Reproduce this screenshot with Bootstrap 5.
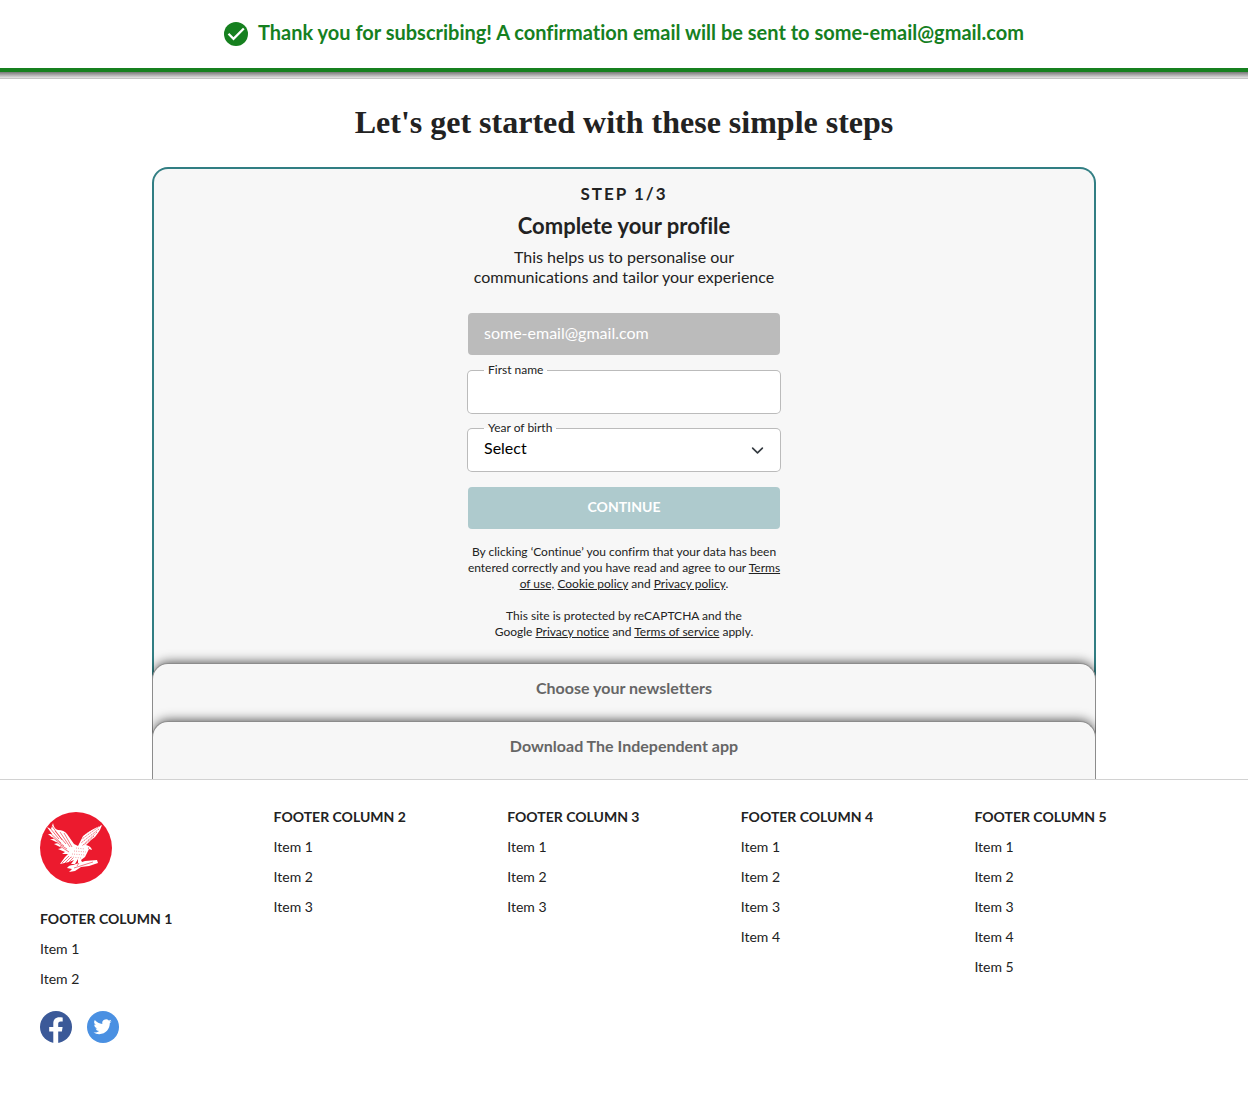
<!DOCTYPE html>
<html lang="en">
<head>
<meta charset="utf-8">
<meta name="viewport" content="width=device-width, initial-scale=1">
<title>Let's get started</title>
<link href="https://cdn.jsdelivr.net/npm/bootstrap@5.3.0/dist/css/bootstrap.min.css" rel="stylesheet">
<style>
  body { font-family: Lato, "Open Sans", sans-serif; font-variant-ligatures: none; color: #222; background: #fff; }
  .notice { color: #16801f; border-bottom: 4px solid #16801f; padding: 20px 16px; font-size: 20px; font-weight: 700; gap: 10px; }
  .notice-text { padding-bottom: 4px; line-height: 24px; }
  .header-edge { height: 7px; border-bottom: 1px solid #c4c4c4; background: linear-gradient(#777, #e4e4e4); }
  .page-title { font-family: "Liberation Serif", serif; font-size: 32px; line-height: 40px; font-weight: 700; padding: 23px 16px 25px; margin: 0; }
  .steps { max-width: 944px; }
  .step-panel { background: #f7f7f7; border: 1px solid #8c8c8c; border-bottom: 0; border-radius: 16px 16px 0 0; color: #666; font-size: 16px; line-height: 24px; font-weight: 700; height: 74px; padding-top: 12px; margin-top: -16px; box-shadow: 0 -2px 12px -2px rgba(0,0,0,.75); clip-path: inset(-14px 0 0 0); }
  .step-panel.last-panel { height: 58px; }
  .step-active { background: #f7f7f7; border: 2px solid #317e83; border-bottom: 0; border-radius: 16px 16px 0 0; padding: 13px 16px 39px; }
  .step-count { font-size: 17px; line-height: 24px; letter-spacing: 2px; font-weight: 700; }
  .step-title { font-size: 22px; line-height: 28px; font-weight: 700; margin: 6px 0 7px; }
  .step-intro { font-size: 16px; line-height: 20px; margin: 0 -2px 10px; }
  .profile-form { width: 312px; max-width: 100%; gap: 16px; }
  .profile-form .form-control, .profile-form .form-select { height: 42px; border: 0; border-radius: 4px; padding: 0 16px 4px; font-size: 16px; color: #000; box-shadow: 0 0 0 1px #bbb; }
  .profile-form .form-select { background-position: right 16px center; background-size: 13px 13px; }
  .profile-form .form-control:disabled { background: #bbb; color: #fff; -webkit-text-fill-color: #fff; opacity: 1; box-shadow: none; }
  .field-label { top: -9px; left: 16px; padding: 0 4px; font-size: 12px; line-height: 16px; background: linear-gradient(#f7f7f7 50%, #fff 50%); }
  .btn-continue, .btn-continue:disabled { height: 42px; background: #aecacd; color: #fff; border: 0; border-radius: 4px; font-size: 14px; font-weight: 700; opacity: 1; padding: 0 0 4px; }
  .legal { font-size: 12px; line-height: 16px; margin: -1px -4px 0; }
  .legal p { margin: 0 0 16px; }
  .legal p:last-child { margin: 0; }
  .legal a, .site-footer a { color: #222; }
  .site-footer { border-top: 1px solid #d2d2d2; background: #fff; padding: 32px 40px 64px; font-size: 14px; line-height: 20px; }
  .site-footer h2 { font-size: 14px; line-height: 20px; font-weight: 700; margin: -5px 0 10px; }
  .site-footer li { margin-bottom: 10px; }
  .site-footer li a { text-decoration: none; }
  .brand-mark { margin-bottom: 30px; }
  .socials { gap: 15px; padding-top: 12px; }
</style>
<script src="https://cdn.jsdelivr.net/npm/bootstrap@5.3.0/dist/js/bootstrap.bundle.min.js"></script>
</head>
<body>
<div class="notice d-flex justify-content-center align-items-center" role="status">
  <svg width="24" height="24" viewBox="0 0 24 24" aria-hidden="true"><circle cx="12" cy="12" r="12" fill="#16801f"/><path d="M4.500 11.800l5 5L19.800 6.500" fill="none" stroke="#fff" stroke-width="2.300"/></svg>
  <span class="notice-text">Thank you for subscribing! A confirmation email will be sent to some-email@gmail.com</span>
</div>
<div class="header-edge"></div>
<main>
  <h1 class="page-title text-center">Let's get started with these simple steps</h1>
  <div class="steps mx-auto text-center">
    <section class="step-active d-flex flex-column align-items-center">
      <div class="step-count">STEP 1/3</div>
      <h2 class="step-title">Complete your profile</h2>
      <form class="profile-form d-flex flex-column">
        <p class="step-intro">This helps us to personalise our communications and tailor your experience</p>
        <input class="form-control" type="email" value="some-email@gmail.com" aria-label="Email" disabled>
        <div class="position-relative">
          <label class="field-label position-absolute" for="first-name">First name</label>
          <input class="form-control" type="text" id="first-name">
        </div>
        <div class="position-relative">
          <label class="field-label position-absolute" for="birth-year">Year of birth</label>
          <select class="form-select" id="birth-year"><option>Select</option></select>
        </div>
        <button class="btn btn-continue" type="submit" disabled>CONTINUE</button>
        <div class="legal">
          <p>By clicking ‘Continue’ you confirm that your data has been entered correctly and you have read and agree to our <a href="#">Terms of use,</a> <a href="#">Cookie policy</a> and <a href="#">Privacy policy</a>.</p>
          <p>This site is protected by reCAPTCHA and the<br>Google <a href="#">Privacy notice</a> and <a href="#">Terms of service</a> apply.</p>
        </div>
      </form>
    </section>
    <section class="step-panel position-relative">Choose your newsletters</section>
    <section class="step-panel last-panel position-relative">Download The Independent app</section>
  </div>
</main>
<footer class="site-footer">
  <div class="row row-cols-5 g-0">
    <div class="col">
      <svg class="brand-mark d-block" width="72" height="72" viewBox="0 0 72 72" role="img" aria-label="The Independent">
        <circle cx="36" cy="36" r="36" fill="#ec1a2e"/>
        <path fill="#fff" d="M13 11Q14 17 18 18Q24 18 27 22L34 32L38 34L43 24Q48 19 62 13L60 18L58 21L55 25L51 28L46 33Q51 34 52 38L49 37L47 41L45 45L41 48L43 52L38 51L38 47L35 52L31 52L34 48L29 50L20 52L25 45L28 42L22 42L25 40L18 37L22 36L14 32L18 31L10 27L14 27L8 22L12 22L7 15L11 17Z"/>
        <path fill="#fff" d="M27 56Q29 53 33 53L45 49L57 48L58 51L49 54L41 55L35 59L29 60L32 57Z"/>
        <g stroke="#ec1a2e" fill="none" stroke-width=".6">
          <path d="M10 16L19 27M12 14L22 28M9 20L21 31M12 25L24 34M16 30L27 37M20 34L29 40M15 19L26 32M20 20L30 35M24 21L32 35"/>
          <path d="M60 14L42 27M59 17L41 31M57 20L42 34M54 24L44 33M51 18L42 24" stroke-dasharray="1.500 .700"/>
          <path d="M36 36L45 37M34 39L46 40M32 42L45 43M31 45L41 46" stroke-dasharray=".700 1.600"/>
          <path d="M22 51L29 44M25 51L31 45M29 50L33 46M34 56L53 50M39 51L37 54"/>
        </g>
        <circle cx="48.500" cy="36" r=".6" fill="#ec1a2e"/>
      </svg>
      <h2>FOOTER COLUMN 1</h2>
      <ul class="list-unstyled mb-0"><li><a href="#">Item 1</a></li><li><a href="#">Item 2</a></li></ul>
      <div class="socials d-flex">
        <a href="#" aria-label="Facebook"><svg class="d-block" width="32" height="32" viewBox="0 0 32 32"><circle cx="16" cy="16" r="16" fill="#3b5998"/><path fill="#fff" d="M13.300 32V20.500H9.200V16h4.100v-3.600c0-4 2.400-6.200 6-6.200 1.200 0 2.700.2 3.400.4v3.900h-2c-2 0-2.500 1.200-2.500 2.500v3h4.400l-.7 4.500h-3.700V32z"/></svg></a>
        <a href="#" aria-label="Twitter"><svg class="d-block" width="32" height="32" viewBox="0 0 32 32"><circle cx="16" cy="16" r="16" fill="#4a90e2"/><path fill="#fff" transform="translate(6.500 7.700)" d="M5.700 15.500c6.800 0 10.600-5.700 10.600-10.600v-.5A7.500 7.500 0 0 0 18.200 2.500a7.400 7.400 0 0 1-2.100.6A3.700 3.700 0 0 0 17.700 1a7.500 7.500 0 0 1-2.400.9 3.700 3.700 0 0 0-6.400 3.400A10.600 10.600 0 0 1 1.300 1.400a3.700 3.700 0 0 0 1.200 5 3.700 3.700 0 0 1-1.700-.5 3.700 3.700 0 0 0 3 3.700 3.700 3.700 0 0 1-1.700.1 3.700 3.700 0 0 0 3.500 2.600A7.500 7.500 0 0 1 0 13.800a10.500 10.500 0 0 0 5.700 1.700"/></svg></a>
      </div>
    </div>
    <div class="col"><h2>FOOTER COLUMN 2</h2><ul class="list-unstyled mb-0"><li><a href="#">Item 1</a></li><li><a href="#">Item 2</a></li><li><a href="#">Item 3</a></li></ul></div>
    <div class="col"><h2>FOOTER COLUMN 3</h2><ul class="list-unstyled mb-0"><li><a href="#">Item 1</a></li><li><a href="#">Item 2</a></li><li><a href="#">Item 3</a></li></ul></div>
    <div class="col"><h2>FOOTER COLUMN 4</h2><ul class="list-unstyled mb-0"><li><a href="#">Item 1</a></li><li><a href="#">Item 2</a></li><li><a href="#">Item 3</a></li><li><a href="#">Item 4</a></li></ul></div>
    <div class="col"><h2>FOOTER COLUMN 5</h2><ul class="list-unstyled mb-0"><li><a href="#">Item 1</a></li><li><a href="#">Item 2</a></li><li><a href="#">Item 3</a></li><li><a href="#">Item 4</a></li><li><a href="#">Item 5</a></li></ul></div>
  </div>
</footer>
</body>
</html>
